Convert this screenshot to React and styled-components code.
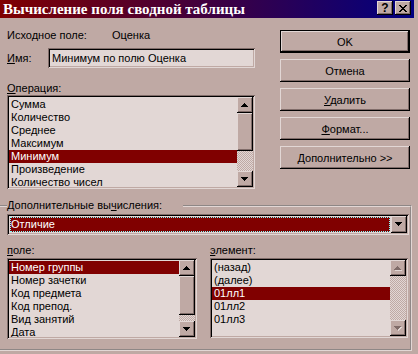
import React from 'react'
import styled, { createGlobalStyle, css } from 'styled-components'

const face = '#bfa9a4'
const light = '#e2d7d5'
const shadow = '#806c69'
const dark = '#000'
const maroon = '#800000'

const GlobalStyle = createGlobalStyle`
  body {
    margin: 0;
    padding: 0;
    background: ${face};
    font-family: "Liberation Sans", Arial, sans-serif;
    font-size: 11px;
    color: #000;
  }
`

const raised = css`
  background: ${face};
  box-shadow: inset -1px -1px ${dark}, inset 1px 1px ${light},
    inset -2px -2px ${shadow}, inset 2px 2px ${face};
`

const sunken = css`
  box-shadow: inset 1px 1px ${shadow}, inset -1px -1px ${light},
    inset 2px 2px ${dark}, inset -2px -2px ${face};
`

const checker = css`
  background-color: ${face};
  background-image: conic-gradient(${light} 25%, ${face} 0 50%, ${light} 0 75%, ${face} 0);
  background-size: 2px 2px;
`

const Window = styled.div`
  width: 418px;
  height: 354px;
  box-sizing: border-box;
  padding-right: 4px;
  overflow: hidden;
  background: ${face};
  display: flex;
  flex-direction: column;
`

const TitleBar = styled.div`
  height: 18px;
  flex-shrink: 0;
  display: flex;
  align-items: center;
  padding: 0 3px;
  background: linear-gradient(90deg, #800000 0%, #40003f 50%, #000080 100%);
  color: #fff;
`

const TitleText = styled.div`
  flex: 1;
  font-family: "Liberation Serif", "Times New Roman", serif;
  font-weight: bold;
  font-size: 15px;
  line-height: 18px;
  white-space: nowrap;
`

const TitleButtons = styled.div`
  display: flex;
  gap: 2px;
  align-self: flex-start;
  margin-top: 1px;
`

const TitleBtn = styled.div`
  width: 16px;
  height: 14px;
  ${raised};
  display: flex;
  align-items: center;
  justify-content: center;
  color: #000;
  font-weight: bold;
  font-size: 12px;
  line-height: 14px;
`

const Top = styled.div`
  display: flex;
  gap: 25px;
  padding: 11px 0 0 7px;
`

const LeftCol = styled.div`
  width: 248px;
  display: flex;
  flex-direction: column;
`

const InfoRow = styled.div`
  display: flex;
  height: 13px;
  line-height: 13px;
`

const Caption = styled.span`
  width: ${(p) => p.$w}px;
  flex-shrink: 0;
  white-space: nowrap;
`

const NameRow = styled.div`
  display: flex;
  align-items: center;
  margin-top: 6px;
`

const TextField = styled.div`
  width: 207px;
  height: 20px;
  box-sizing: border-box;
  padding: 3px 4px;
  line-height: 14px;
  background: ${light};
  ${sunken};
  white-space: nowrap;
`

const SectionLabel = styled.div`
  margin-top: ${(p) => p.$mt || 0}px;
  line-height: 13px;
  height: 13px;
  white-space: nowrap;
`

const ListBox = styled.div`
  width: ${(p) => p.$w}px;
  height: ${(p) => p.$h}px;
  box-sizing: border-box;
  padding: 2px;
  display: flex;
  background: ${light};
  ${sunken};
`

const Items = styled.div`
  flex: 1;
  overflow: hidden;
  padding-top: 1px;
`

const Item = styled.div`
  height: 13px;
  line-height: 13px;
  padding-left: 2px;
  white-space: nowrap;
  background: ${(p) => (p.$selected ? maroon : 'transparent')};
  color: ${(p) => (p.$selected ? '#fff' : '#000')};
`

const ScrollBar = styled.div`
  width: 16px;
  display: flex;
  flex-direction: column;
  ${checker};
`

const ScrollBtn = styled.div`
  width: 16px;
  height: 16px;
  flex-shrink: 0;
  ${raised};
  display: flex;
  align-items: center;
  justify-content: center;
`

const Thumb = styled.div`
  height: ${(p) => p.$h}px;
  flex-shrink: 0;
  ${raised};
`

const Track = styled.div`
  flex: 1;
`

const RightCol = styled.div`
  width: 130px;
  display: flex;
  flex-direction: column;
  gap: 6px;
  padding-top: 1px;
`

const Button = styled.div`
  height: 23px;
  box-sizing: border-box;
  display: flex;
  align-items: center;
  justify-content: center;
  ${raised};
  ${(p) =>
    p.$default &&
    css`
      border: 1px solid ${dark};
    `}
`

const Frame = styled.fieldset`
  width: 412px;
  box-sizing: border-box;
  margin: 10px 0 0 0;
  padding: 2px 1px 10px 7px;
  border: 2px groove ${light};
  border-left: none;
  min-width: 0;
`

const Legend = styled.legend`
  padding: 0 21px 0 0;
  line-height: 13px;
  height: 13px;
`

const Combo = styled.div`
  width: 402px;
  height: 21px;
  box-sizing: border-box;
  padding: 2px;
  display: flex;
  background: ${light};
  ${sunken};
`

const ComboValue = styled.div`
  flex: 1;
  margin: 1px;
  background: ${maroon};
  color: #fff;
  line-height: 15px;
  padding-left: 1px;
  outline: 1px dotted #7fffff;
  outline-offset: -1px;
`

const ComboBtn = styled.div`
  width: 16px;
  height: 17px;
  ${raised};
  display: flex;
  align-items: center;
  justify-content: center;
`

const PairGrid = styled.div`
  display: grid;
  grid-template-columns: 190px 198px;
  column-gap: 13px;
  margin-top: 9px;
`

const Col = styled.div`
  display: flex;
  flex-direction: column;
  gap: 1px;
`

const Arrow = ({ down, disabled }) => {
  const d = down
    ? 'M0 0h7v1h-7z M1 1h5v1h-5z M2 2h3v1h-3z M3 3h1v1h-1z'
    : 'M3 0h1v1h-1z M2 1h3v1h-3z M1 2h5v1h-5z M0 3h7v1h-7z'
  return (
    <svg width="8" height="5" viewBox="0 0 8 5" shapeRendering="crispEdges">
      {disabled && <path d={d} fill={light} transform="translate(1 1)" />}
      <path d={d} fill={disabled ? shadow : '#000'} />
    </svg>
  )
}

const CloseGlyph = () => (
  <svg width="8" height="7" viewBox="0 0 8 7" shapeRendering="crispEdges">
    <path
      d="M0 0h2v1h-2z M6 0h2v1h-2z M1 1h2v1h-2z M5 1h2v1h-2z M2 2h4v1h-4z M3 3h2v1h-2z M2 4h4v1h-4z M1 5h2v1h-2z M5 5h2v1h-2z M0 6h2v1h-2z M6 6h2v1h-2z"
      fill="#000"
    />
  </svg>
)

const Scroll = ({ thumb, disabled }) => (
  <ScrollBar>
    <ScrollBtn>
      <Arrow disabled={disabled} />
    </ScrollBtn>
    {thumb ? <Thumb $h={thumb} /> : null}
    <Track />
    <ScrollBtn>
      <Arrow down disabled={disabled} />
    </ScrollBtn>
  </ScrollBar>
)

const operations = ['Сумма', 'Количество', 'Среднее', 'Максимум', 'Минимум', 'Произведение', 'Количество чисел']
const fields = ['Номер группы', 'Номер зачетки', 'Код предмета', 'Код препод.', 'Вид занятий', 'Дата']
const elements = ['(назад)', '(далее)', '01лл1', '01лл2', '01лл3']

class App extends React.Component {
  state = {
    operation: 'Минимум',
    field: 'Номер группы',
    element: '01лл1',
  }

  render() {
    return (
      <>
        <GlobalStyle />
        <Window>
          <TitleBar>
            <TitleText>Вычисление поля сводной таблицы</TitleText>
            <TitleButtons>
              <TitleBtn>?</TitleBtn>
              <TitleBtn>
                <CloseGlyph />
              </TitleBtn>
            </TitleButtons>
          </TitleBar>

          <Top>
            <LeftCol>
              <InfoRow>
                <Caption $w={105}>Исходное поле:</Caption>
                <span>Оценка</span>
              </InfoRow>
              <NameRow>
                <Caption $w={41}>
                  <u>И</u>мя:
                </Caption>
                <TextField>Минимум по полю Оценка</TextField>
              </NameRow>
              <SectionLabel $mt={14}>
                <u>О</u>перация:
              </SectionLabel>
              <ListBox $w={248} $h={94}>
                <Items>
                  {operations.map((o) => (
                    <Item key={o} $selected={o === this.state.operation}>
                      {o}
                    </Item>
                  ))}
                </Items>
                <Scroll thumb={38} />
              </ListBox>
            </LeftCol>
            <RightCol>
              <Button $default>OK</Button>
              <Button>Отмена</Button>
              <Button>
                <span>
                  <u>У</u>далить
                </span>
              </Button>
              <Button>
                <span>
                  <u>Ф</u>ормат...
                </span>
              </Button>
              <Button>
                <span>
                  <u>Д</u>ополнительно &gt;&gt;
                </span>
              </Button>
            </RightCol>
          </Top>

          <Frame>
            <Legend>
              Дополнительные вы<u>ч</u>исления:
            </Legend>
            <Combo>
              <ComboValue>Отличие</ComboValue>
              <ComboBtn>
                <Arrow down />
              </ComboBtn>
            </Combo>
            <PairGrid>
              <Col>
                <SectionLabel>
                  <u>п</u>оле:
                </SectionLabel>
                <ListBox $w={190} $h={81}>
                  <Items>
                    {fields.map((f) => (
                      <Item key={f} $selected={f === this.state.field}>
                        {f}
                      </Item>
                    ))}
                  </Items>
                  <Scroll thumb={39} />
                </ListBox>
              </Col>
              <Col>
                <SectionLabel>
                  <u>э</u>лемент:
                </SectionLabel>
                <ListBox $w={198} $h={80}>
                  <Items>
                    {elements.map((e) => (
                      <Item key={e} $selected={e === this.state.element}>
                        {e}
                      </Item>
                    ))}
                  </Items>
                  <Scroll disabled />
                </ListBox>
              </Col>
            </PairGrid>
          </Frame>
        </Window>
      </>
    )
  }
}

export default App
